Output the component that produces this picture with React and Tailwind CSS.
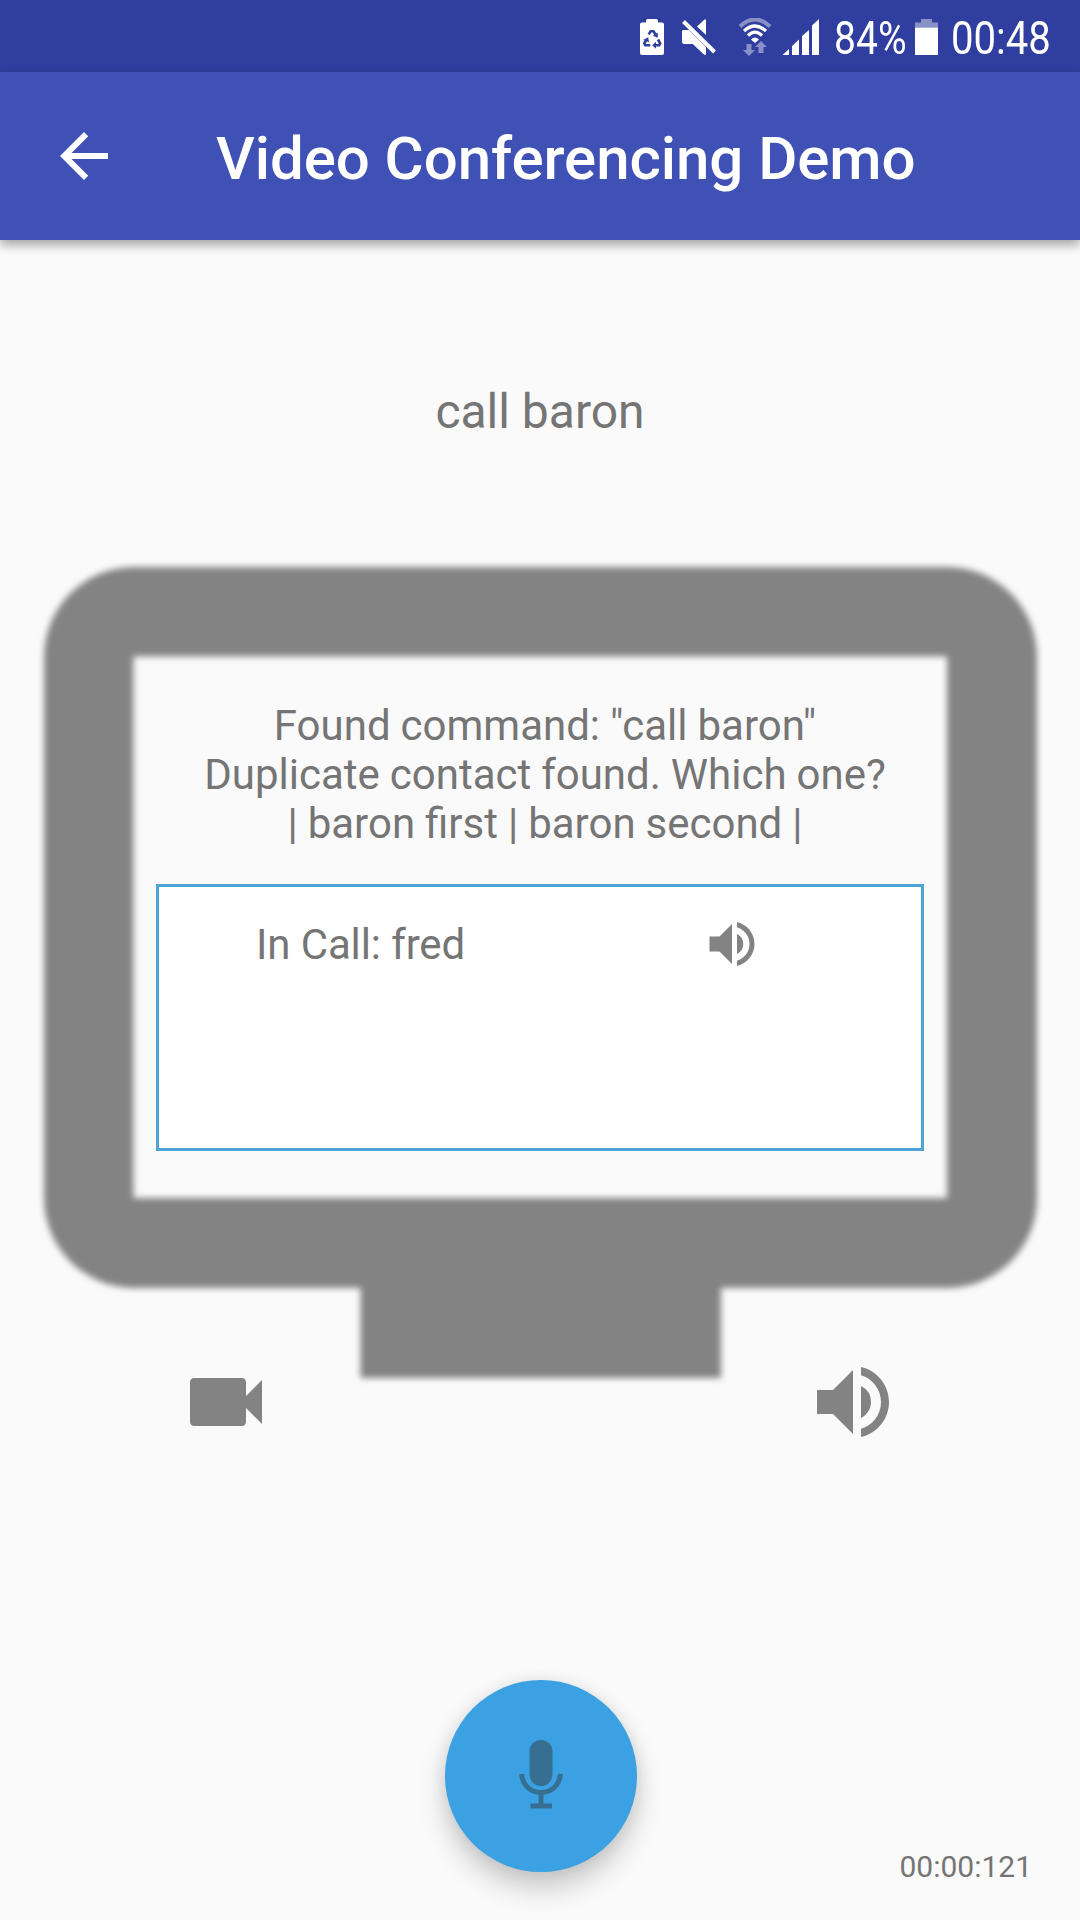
import React from "react";
import { MdArrowBack, MdVideocam, MdVolumeUp } from "react-icons/md";

function StatusBar() {
  return (
    <div className="flex h-[72px] items-start bg-[#303f9f] pt-[18px] pl-[639px] text-white">
      <svg className="h-[38px] w-[26px] shrink-0" viewBox="0 0 26 38" fill="none">
        <path d="M3 4.500h4V3q0-2 2-2h8q2 0 2 2v1.500h4q2 0 2 2v28.500q0 2-2 2H3q-2 0-2-2V6.500q0-2 2-2z" fill="#fff" />
        <path d="M9.700 16.500l2-3.300h2.800l2 3.300M7.500 21.500l-2.200 4 1 1.700h5M19 21.500l2.200 4-1 1.700h-4" stroke="#303f9f" strokeWidth="2.600" />
        <path d="M18.800 14.500v5.200l-5-2zM4 22l5.200-2.800.800 5zM17 23.700v7l-3.800-3.500z" fill="#303f9f" />
      </svg>
      <svg className="ml-[16px] h-[38px] w-[36px] shrink-0" viewBox="0 0 36 38">
        <path d="M25 2v15L16 8.500l7-6.500q1.500-1.500 2 0z M3 12h5l17 17v7q-1 1.500-3-.500L12 26H4q-3 0-3-3v-9q0-2 2-2z" fill="#fff" />
        <path d="M2.500 3.500L33.500 34" stroke="#303f9f" strokeWidth="6.500" />
        <path d="M2.500 3.500L33.500 34" stroke="#fff" strokeWidth="4" />
        <path d="M3 12h5l17 17v7q-1 1.500-3-.500L12 26H4q-3 0-3-3v-9q0-2 2-2z" fill="#fff" />
      </svg>
      <svg className="ml-[21px] h-[38px] w-[34px] shrink-0" viewBox="0 0 34 38" fill="none">
        <path d="M2 8.500Q17-5.500 32 8.500" stroke="#8990c8" strokeWidth="4" />
        <path d="M6 13Q17 3 28 13" stroke="#fff" strokeWidth="3.200" />
        <path d="M10 17.500Q17 10.500 24 17.500" stroke="#fff" strokeWidth="3.200" />
        <path d="M13 21.500q4-4 8 0L17 25z" fill="#fff" />
        <path d="M8.500 26h5v6h3.500l-6 6-6-6h3.500z M20.500 35h5v-6h3.500l-6-6-6 6h3.500z" fill="#8990c8" />
      </svg>
      <svg className="ml-[9px] h-[38px] w-[40px] shrink-0" viewBox="0 0 40 38" fill="#fff">
        <path d="M1.500 37L8 31v6z M11 28l7-6.500V37h-7z M21 18l7-6v25h-7z M31 7.500L38 1v36h-7z" />
      </svg>
      <div className="ml-[13px] w-[72px] origin-left scale-x-[0.850] text-[46px] leading-[40px] whitespace-nowrap">84%</div>
      <svg className="ml-[8px] h-[38px] w-[25px] shrink-0" viewBox="0 0 25 38">
        <path d="M1 4.500h6V1h11v3.500h6V9.500H1z" fill="#8990c8" />
        <path d="M1 9.500h23V37H1z" fill="#fff" />
      </svg>
      <div className="ml-[12px] w-[110px] origin-left scale-x-[0.872] text-[46px] leading-[40px] whitespace-nowrap">00:48</div>
    </div>
  );
}

function AppBar() {
  return (
    <header className="relative flex h-[168px] items-center bg-[#3f51b5] pl-[48px] text-white shadow-[0_5px_10px_rgba(0,0,0,0.35)]">
      <MdArrowBack className="size-[72px] shrink-0" />
      <h1 className="ml-[96px] pt-[5px] text-[60px] leading-[72px] font-medium tracking-[-0.060px] whitespace-nowrap">Video Conferencing Demo</h1>
    </header>
  );
}

function Monitor() {
  return (
    <section className="relative mx-[44px] mt-[111px] h-[812px] w-[993px]">
      <svg className="absolute inset-0 size-full overflow-visible blur-[3px]" viewBox="0 0 993 812" fill="#838383">
        <path fillRule="evenodd" d="M90 1H903A90 90 0 0 1 993 91V632A90 90 0 0 1 903 722H677V812H316.500V722H90A90 90 0 0 1 0 632V91A90 90 0 0 1 90 1zM89.500 90.500V632H903V90.500z" />
      </svg>
      <div className="relative flex flex-col px-[112px] pt-[135px]">
        <p className="pl-[9px] text-center text-[42px] leading-[49px] whitespace-nowrap [word-spacing:-0.450px]">
          Found command: "call baron"
          <br />
          Duplicate contact found. Which one?
          <br />| baron first | baron second |
        </p>
        <div className="mt-[36px] flex h-[267px] w-[768px] items-start border-[3px] border-[#4ea3d8] bg-white pt-[27px] pl-[97px]">
          <span className="w-[446px] pt-[6px] text-[42px] leading-[49px] tracking-[-0.120px]">In Call: fred</span>
          <MdVolumeUp className="size-[60px] text-[#838383]" />
        </div>
      </div>
    </section>
  );
}

export default function App() {
  return (
    <div className="flex h-[1920px] w-[1080px] flex-col overflow-hidden bg-[#fafafa] font-[Roboto,sans-serif] text-[#757575]">
      <StatusBar />
      <AppBar />
      <main className="flex flex-1 flex-col">
        <p className="mt-[144px] mb-[15px] text-center text-[48px] leading-[56px]">call baron</p>
        <Monitor />
        <div className="mt-[-24px] flex justify-between pr-[179px] pl-[178px] text-[#838383]">
          <MdVideocam className="size-[96px]" />
          <MdVolumeUp className="size-[96px]" />
        </div>
        <div className="mt-[230px] flex">
          <button className="ml-[445px] flex size-[192px] items-center justify-center rounded-full bg-[#3ba1e3] shadow-[0_16px_28px_rgba(0,0,0,0.20),0_0_16px_rgba(0,0,0,0.08)]">
            <svg className="size-[72px] blur-[0.600px]" viewBox="0 0 72 72" fill="none" stroke="#376f92">
              <rect x="24.500" y="0" width="23" height="46" rx="11.500" fill="#376f92" stroke="none" />
              <path d="M16.500 34C18 46 26 52.500 36 52.500S54 46 55.500 34" strokeWidth="5" />
              <path d="M36 52V66M25.500 66H47" strokeWidth="5" />
            </svg>
          </button>
          <time className="mt-[169px] ml-auto pr-[48px] text-[30px] leading-[36px]">00:00:121</time>
        </div>
      </main>
    </div>
  );
}
